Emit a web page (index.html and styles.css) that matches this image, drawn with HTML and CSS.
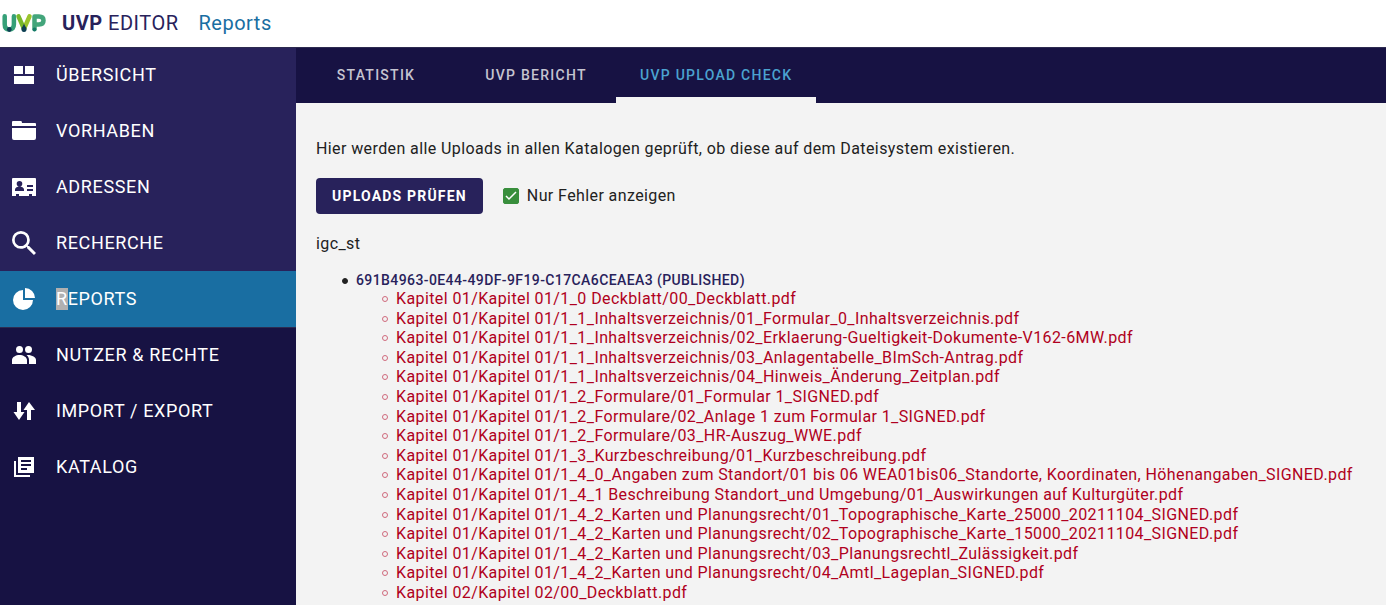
FILE: index.html
```html
<!DOCTYPE html>
<html lang="de">
<head>
<meta charset="utf-8">
<meta name="viewport" content="width=device-width, initial-scale=1">
<title>UVP Editor – Reports</title>
<link rel="stylesheet" href="styles.css">
</head>
<body>
<header class="topbar">
  <svg class="logo" viewBox="0 0 44 20" aria-hidden="true" fill="none" stroke-width="4.500" stroke-linecap="round" stroke-linejoin="round">
    <path d="M2.700 3.300v8q0 5.200 4.600 5.200t4.600-5.200v-8" stroke="#35a078"/>
    <path d="M32.500 16V3.500h4.500q4.500 0 4.500 4t-4.500 4h-4" stroke="#43a57b"/>
    <path d="M16.500 3.300l5.500 12.500" stroke="#78b82a"/>
    <path d="M22 15.800l5.500-12.500" stroke="#9bc42c"/>
    <circle cx="7.300" cy="16.500" r="2.400" fill="#0e4053"/>
    <path d="M22 10.500q1 3 2.500 4.500q.5 4-2.500 4t-2.500-4q1.500-1.500 2.500-4.500z" fill="#0e4053"/>
    <circle cx="32.500" cy="16.500" r="2" fill="#157a68"/>
  </svg>
  <h1 class="brand"><strong>UVP</strong> EDITOR</h1>
  <span class="page-name">Reports</span>
</header>
<div class="shell">
  <nav class="sidebar" aria-label="Hauptmenü">
    <div class="group group-main">
      <a class="item" href="#"><svg class="icon" viewBox="0 0 24 24"><path d="M2 3h9v8H2zM13 3h9v8h-9zM2 13h20v8H2z"/></svg><span>ÜBERSICHT</span></a>
      <a class="item" href="#"><svg class="icon" viewBox="0 0 24 24"><path d="M1 2h8q1 0 1 2h13q1 0 1 1v2H0V3q0-1 1-1zM0 9h24v10q0 2-2 2H2q-2 0-2-2z"/></svg><span>VORHABEN</span></a>
      <a class="item" href="#"><svg class="icon" viewBox="0 0 24 24"><path fill-rule="evenodd" d="M1 3h22q1 0 1 1v17h-4v-2h-3v2H7v-2H4v2H0V4q0-1 1-1zM7.500 6a2.800 2.800 0 1 0 0 5.600a2.800 2.800 0 0 0 0-5.600zM3 16h9v-1.500c0-2-2.500-3-4.500-3S3 12.500 3 14.500zM15 10v2h6v-2zM15 14v2h6v-2z"/></svg><span>ADRESSEN</span></a>
      <a class="item" href="#"><svg class="icon" viewBox="3 3 17.500 17.500"><path d="M15.500 14h-.79l-.28-.27A6.471 6.471 0 0 0 16 9.500 6.500 6.500 0 1 0 9.500 16c1.610 0 3.090-.59 4.230-1.570l.27.28v.79l5 4.990L20.490 19l-4.990-5zm-6 0C7.010 14 5 11.990 5 9.500S7.010 5 9.500 5 14 7.010 14 9.500 11.990 14 9.500 14z"/></svg><span>RECHERCHE</span></a>
      <a class="item active" href="#" aria-current="page"><svg class="icon" viewBox="0 0 24 24"><path d="M11 3v10h10A10 10 0 1 1 11 3zM13 1a10 10 0 0 1 10 10H13z"/></svg><span><mark class="selected">R</mark>EPORTS</span></a>
    </div>
    <div class="group group-admin">
      <a class="item" href="#"><svg class="icon" viewBox="0 0 24 24"><path d="M7.500 3a3.500 3.500 0 1 0 0 7a3.500 3.500 0 0 0 0-7zM16.500 3a3.500 3.500 0 1 0 0 7a3.500 3.500 0 0 0 0-7zM0 21v-4c0-3 4-5 7.500-5s7.500 2 7.500 5v4zM17 21v-4c0-2-1-3.700-2.500-5 5-.5 9.500 2 9.500 5v4z"/></svg><span>NUTZER &amp; RECHTE</span></a>
      <a class="item" href="#"><svg class="icon" viewBox="0 0 24 24"><path d="M5 3h4v10h3.500L7 21l-5.500-8H5zM17 3l6 8h-4v10h-4V11h-3.500z"/></svg><span>IMPORT / EXPORT</span></a>
      <a class="item" href="#"><svg class="icon" viewBox="0 0 24 24"><path fill-rule="evenodd" d="M2 6h2v14h14v2H2zM6 2h16v16H6zM9 5v2h10V5zM9 9v2h10V9zM9 13v2h6v-2z"/></svg><span>KATALOG</span></a>
    </div>
  </nav>
  <main class="main">
    <nav class="tabs" aria-label="Reports">
      <a class="tab" href="#">STATISTIK</a>
      <a class="tab" href="#">UVP BERICHT</a>
      <a class="tab current" href="#" aria-current="true">UVP UPLOAD CHECK</a>
    </nav>
    <section class="content">
      <p class="intro">Hier werden alle Uploads in allen Katalogen geprüft, ob diese auf dem Dateisystem existieren.</p>
      <div class="actions">
        <button class="check-button" type="button">UPLOADS PRÜFEN</button>
        <label class="option" for="errors-only"><span class="box"><input class="tick" type="checkbox" id="errors-only" checked><svg class="tick-mark" viewBox="0 0 16 16" aria-hidden="true"><path d="M3 8l3 3 7-7"/></svg></span>Nur Fehler anzeigen</label>
      </div>
      <p class="catalog">igc_st</p>
      <ul class="datasets">
        <li><div><a class="dataset" href="#">691B4963-0E44-49DF-9F19-C17CA6CEAEA3 (PUBLISHED)</a>
          <ul class="files">
            <li>Kapitel 01/Kapitel 01/1_0 Deckblatt/00_Deckblatt.pdf</li>
            <li>Kapitel 01/Kapitel 01/1_1_Inhaltsverzeichnis/01_Formular_0_Inhaltsverzeichnis.pdf</li>
            <li>Kapitel 01/Kapitel 01/1_1_Inhaltsverzeichnis/02_Erklaerung-Gueltigkeit-Dokumente-V162-6MW.pdf</li>
            <li>Kapitel 01/Kapitel 01/1_1_Inhaltsverzeichnis/03_Anlagentabelle_BImSch-Antrag.pdf</li>
            <li>Kapitel 01/Kapitel 01/1_1_Inhaltsverzeichnis/04_Hinweis_Änderung_Zeitplan.pdf</li>
            <li>Kapitel 01/Kapitel 01/1_2_Formulare/01_Formular 1_SIGNED.pdf</li>
            <li>Kapitel 01/Kapitel 01/1_2_Formulare/02_Anlage 1 zum Formular 1_SIGNED.pdf</li>
            <li>Kapitel 01/Kapitel 01/1_2_Formulare/03_HR-Auszug_WWE.pdf</li>
            <li>Kapitel 01/Kapitel 01/1_3_Kurzbeschreibung/01_Kurzbeschreibung.pdf</li>
            <li>Kapitel 01/Kapitel 01/1_4_0_Angaben zum Standort/01 bis 06 WEA01bis06_Standorte, Koordinaten, Höhenangaben_SIGNED.pdf</li>
            <li>Kapitel 01/Kapitel 01/1_4_1 Beschreibung Standort_und Umgebung/01_Auswirkungen auf Kulturgüter.pdf</li>
            <li>Kapitel 01/Kapitel 01/1_4_2_Karten und Planungsrecht/01_Topographische_Karte_25000_20211104_SIGNED.pdf</li>
            <li>Kapitel 01/Kapitel 01/1_4_2_Karten und Planungsrecht/02_Topographische_Karte_15000_20211104_SIGNED.pdf</li>
            <li>Kapitel 01/Kapitel 01/1_4_2_Karten und Planungsrecht/03_Planungsrechtl_Zulässigkeit.pdf</li>
            <li>Kapitel 01/Kapitel 01/1_4_2_Karten und Planungsrecht/04_Amtl_Lageplan_SIGNED.pdf</li>
            <li>Kapitel 02/Kapitel 02/00_Deckblatt.pdf</li>
          </ul></div>
        </li>
      </ul>
    </section>
  </main>
</div>
</body>
</html>
```
FILE: styles.css
```css
*, *::before { box-sizing: border-box; }

body {
  margin: 0;
  height: 100vh;
  overflow: hidden;
  display: flex;
  flex-direction: column;
  background: #f3f3f3;
  color: #212121;
  font-family: Roboto, "Liberation Sans", sans-serif;
  font-size: 16px;
  letter-spacing: 0.025em;
}

a { color: inherit; text-decoration: none; }

.topbar {
  flex: none;
  display: flex;
  align-items: center;
  padding: 11px 2px 12px;
  background: #fff;
  color: #28225b;
  font-size: 20px;
  line-height: 24px;
  letter-spacing: 0.025em;
}
.logo { width: 44px; height: 20px; margin-right: 16px; }
.brand { margin: 0 20px 0 0; font-size: 20px; font-weight: 400; }
.page-name { color: #196ea2; }

.shell { flex: 1; min-height: 0; display: flex; }

.sidebar {
  flex: none;
  width: 296px;
  background: #171243;
  color: #fff;
}
.group { box-shadow: inset 0 1px #2d2b50; }
.group-main { background: #28225b; }
.item {
  display: flex;
  align-items: center;
  gap: 20px;
  height: 56px;
  padding: 0 12px;
  font-size: 18px;
  line-height: 22px;
  letter-spacing: 0.035em;
}
.active { background: #196ea2; }
.icon { width: 24px; height: 24px; fill: currentColor; }
.selected { display: inline-block; background: #b0b0b0; color: inherit; }

.main { flex: 1; min-width: 0; overflow: hidden; }
.tabs {
  display: flex;
  background: #171243;
  box-shadow: inset 0 1px #2d2b50;
  color: #c5c4d0;
}
.tab {
  display: flex;
  align-items: center;
  justify-content: center;
  min-width: 160px;
  height: 56px;
  padding: 0 24px;
  border-bottom: 6px solid transparent;
  border-top: 6px solid transparent;
  font-size: 14px;
  font-weight: 500;
  letter-spacing: 0.09em;
}
.current { color: #4ba3d0; border-bottom-color: #f3f3f3; }

.content { padding: 36px 20px 0; line-height: 20px; }
.intro { margin: 0 0 19px; }
.actions { display: flex; align-items: center; gap: 20px; }
.check-button {
  height: 36px;
  padding: 0 16px;
  border: 0;
  border-radius: 4px;
  background: #28225b;
  color: #fff;
  font: 700 14px Roboto, "Liberation Sans", sans-serif;
  letter-spacing: 0.085em;
}
.option { display: flex; align-items: center; gap: 8px; }
.box { display: grid; width: 16px; height: 16px; }
.tick, .tick-mark { grid-area: 1 / 1; width: 16px; height: 16px; margin: 0; }
.tick { appearance: none; border: 1px solid #388e3c; border-radius: 2px; background: #fff; }
.tick:checked { background: #388e3c; }
.tick-mark { fill: none; stroke: #fff; stroke-width: 1.5; pointer-events: none; }
.catalog { margin: 20px 0 17px; }

.datasets, .files { margin: 0; padding-left: 26px; list-style: none; }
.datasets li { display: flex; gap: 8px; }
.datasets li::before {
  content: "";
  flex: none;
  width: 6px;
  height: 6px;
  margin-top: 7px;
  border: 1px solid #212121;
  border-radius: 50%;
  background: #212121;
}
.datasets { line-height: 18px; }
.dataset { color: #28225b; font-size: 14px; font-weight: 500; }
.files {
  color: #b00020;
  line-height: 1.225;
  white-space: nowrap;
}
.datasets .files li::before { border-color: #d06a7d; background: none; }
```
